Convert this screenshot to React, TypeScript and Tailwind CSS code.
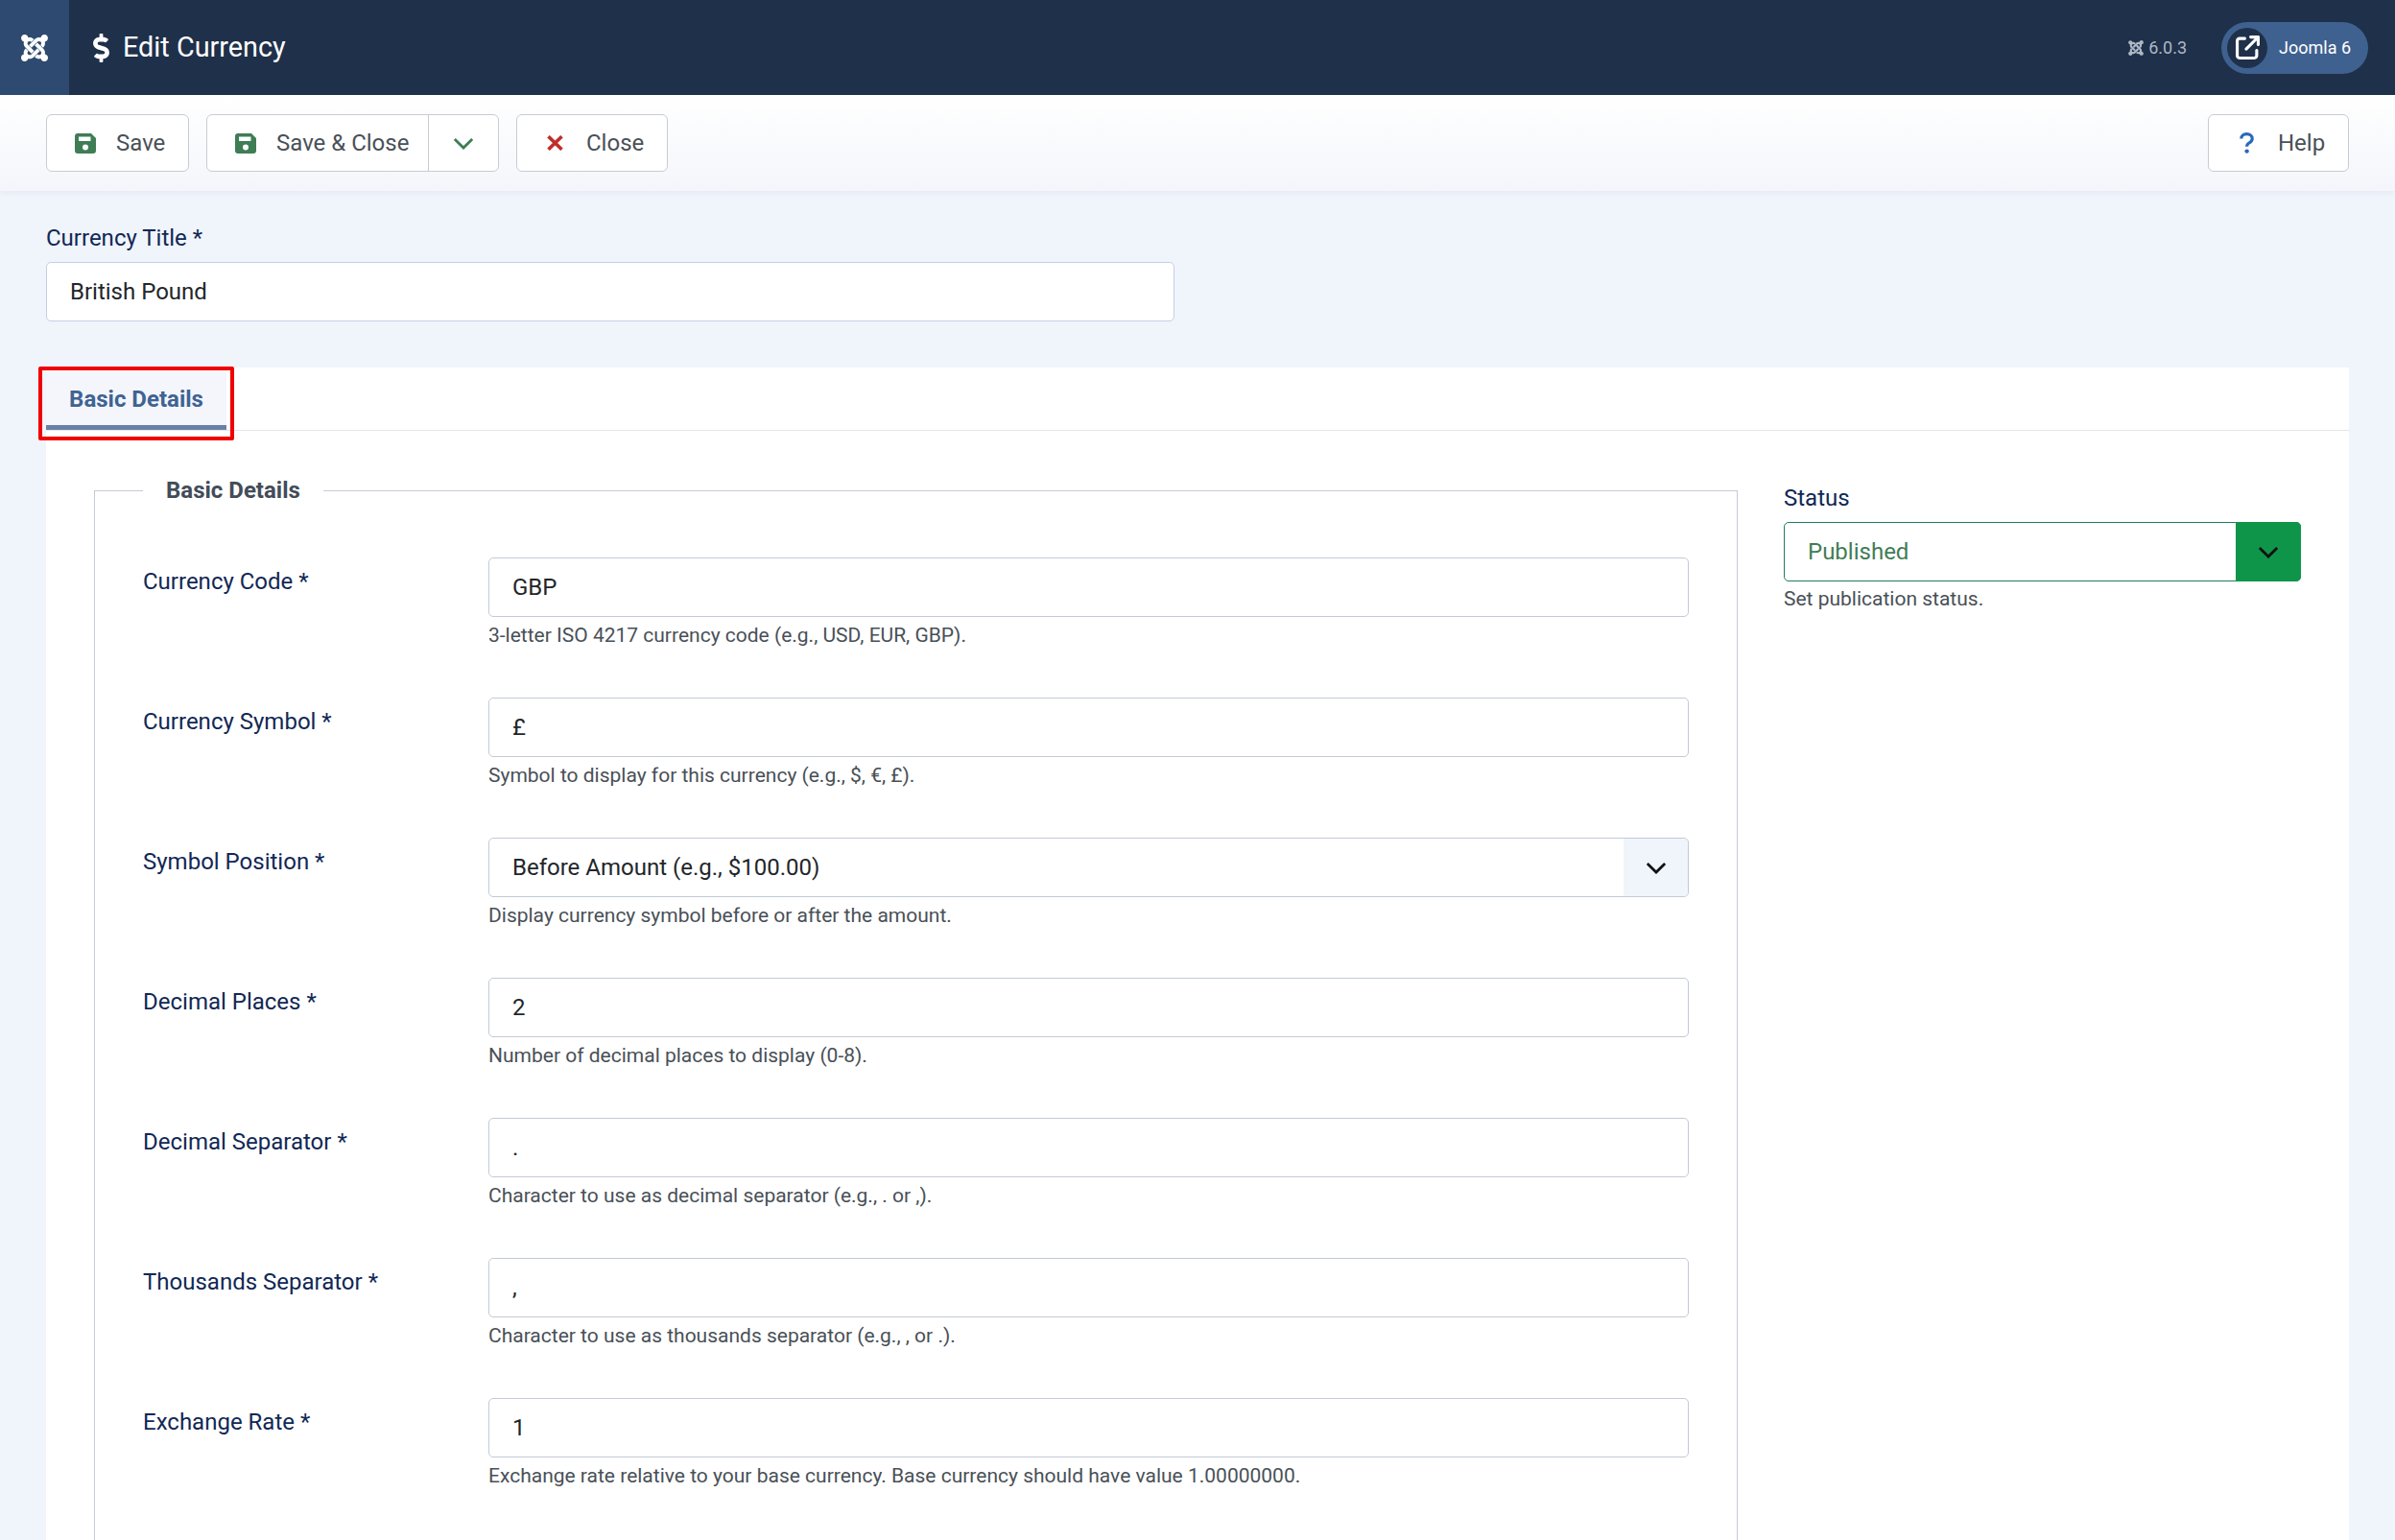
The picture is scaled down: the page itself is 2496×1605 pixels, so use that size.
import React from 'react';
import { FaJoomla, FaDollarSign } from 'react-icons/fa';
import { FaArrowUpRightFromSquare } from 'react-icons/fa6';

const Chevron: React.FC<{ className?: string }> = ({ className }) => (
  <svg viewBox="0 0 24 14" className={className} fill="none" stroke="currentColor" strokeWidth="3">
    <path d="M2 2l10 10L22 2" />
  </svg>
);

const SaveIcon: React.FC = () => (
  <svg viewBox="0 0 22 21" className="w-[22px] h-[21px] mr-[21px] text-[#3f7d55]">
    <path
      fill="currentColor"
      fillRule="evenodd"
      d="M3 0h14l5 5v13a3 3 0 0 1-3 3H3a3 3 0 0 1-3-3V3a3 3 0 0 1 3-3zM4 3.5v4.5h12.5V3.5zM11 11.5a3 3 0 1 0 0 6 3 3 0 0 0 0-6z"
    />
  </svg>
);

const CloseIcon: React.FC = () => (
  <svg viewBox="0 0 17 16" className="w-[17px] h-[16px] mr-[24px] text-[#bf2f2b]" fill="none" stroke="currentColor" strokeWidth="3.6">
    <path d="M1.5 1.2l14 13.6M15.5 1.2l-14 13.6" />
  </svg>
);

const HelpIcon: React.FC = () => (
  <svg viewBox="0 0 15 22" className="w-[15px] h-[22px] mr-[25px] text-[#2a69b8]">
    <path
      fill="none"
      stroke="currentColor"
      strokeWidth="3.2"
      d="M1.8 6.5C1.8 3.4 4.2 1.7 7.4 1.7c3.3 0 5.8 1.8 5.8 4.7 0 2.5-1.7 3.6-3.3 4.6-1.5.9-2.3 1.7-2.3 3.7"
    />
    <circle cx="7.6" cy="19.6" r="2.2" fill="currentColor" />
  </svg>
);

const fields = [
  { label: 'Currency Code *', value: 'GBP', help: '3-letter ISO 4217 currency code (e.g., USD, EUR, GBP).' },
  { label: 'Currency Symbol *', value: '£', help: 'Symbol to display for this currency (e.g., $, €, £).' },
  { label: 'Symbol Position *', value: 'Before Amount (e.g., $100.00)', help: 'Display currency symbol before or after the amount.', select: true },
  { label: 'Decimal Places *', value: '2', help: 'Number of decimal places to display (0-8).' },
  { label: 'Decimal Separator *', value: '.', help: 'Character to use as decimal separator (e.g., . or ,).' },
  { label: 'Thousands Separator *', value: ',', help: 'Character to use as thousands separator (e.g., , or .).' },
  { label: 'Exchange Rate *', value: '1', help: 'Exchange rate relative to your base currency. Base currency should have value 1.00000000.' },
];

const inputBase = 'w-full h-[62px] rounded-[5px] border bg-white px-6 text-[24px] outline-none';

const ToolbarButton: React.FC<{ icon: React.ReactNode; label: string; className: string }> = ({ icon, label, className }) => (
  <button className={`h-[60px] flex items-center bg-white border border-[#c8ccd3] rounded-[6px] text-[24px] text-[#495057] ${className}`}>
    {icon}
    <span>{label}</span>
  </button>
);

const App: React.FC = () => {
  return (
    <div className="h-[1605px] overflow-hidden bg-[#f0f4fb] font-['Roboto',sans-serif]">
      <header className="h-[99px] flex items-center bg-[#1f304a] text-white">
        <div className="w-[72px] h-full flex items-center justify-center bg-[#2e4a71]">
          <FaJoomla className="w-[32px] h-[32px]" />
        </div>
        <FaDollarSign className="ml-[25px] w-[17px] h-[30px]" />
        <h1 className="ml-[14px] text-[28.8px] leading-none">Edit Currency</h1>
        <div className="ml-auto flex items-center text-[#aeb7c4] text-[18px]">
          <FaJoomla className="w-[18px] h-[18px]" />
          <span className="ml-[4px]">6.0.3</span>
        </div>
        <div className="ml-[36px] mr-[28px] w-[153px] h-[54px] flex items-center rounded-full bg-[#3f618f] pl-[6px]">
          <div className="w-[42px] h-[42px] rounded-full bg-[#1f304a] flex items-center justify-center">
            <FaArrowUpRightFromSquare className="w-[25px] h-[25px]" />
          </div>
          <span className="ml-[12px] text-[18px]">Joomla 6</span>
        </div>
      </header>

      <div className="h-[100px] flex items-start pt-[20px] px-[48px] bg-gradient-to-b from-white to-[#f4f6fb] shadow-[0_2px_6px_rgba(30,50,90,0.05)]">
        <ToolbarButton className="w-[149px] pl-[29px]" icon={<SaveIcon />} label="Save" />
        <div className="ml-[18px] w-[305px] h-[60px] flex bg-white border border-[#c8ccd3] rounded-[6px] text-[24px] text-[#495057]">
          <button className="w-[231px] flex items-center pl-[29px] border-r border-[#c8ccd3]">
            <SaveIcon />
            <span>Save &amp; Close</span>
          </button>
          <button className="flex-1 flex items-center justify-center text-[#3f7d55]">
            <Chevron className="w-[22px] h-[13px]" />
          </button>
        </div>
        <ToolbarButton className="ml-[18px] w-[158px] pl-[31px]" icon={<CloseIcon />} label="Close" />
        <ToolbarButton className="ml-auto w-[147px] pl-[32px]" icon={<HelpIcon />} label="Help" />
      </div>

      <main className="px-[48px]">
        <label className="block mt-[31px] text-[24px] leading-[36px] text-[#112855]">Currency Title *</label>
        <div className="mt-[7px] w-[1176px]">
          <input readOnly defaultValue="British Pound" className={`${inputBase} block border-[#c3d0e4] text-[#22262a]`} />
        </div>

        <section className="relative mt-[48px] bg-white min-h-[1300px]">
          <div className="h-[66px] border-b border-[#e3e6eb]">
            <div className="w-[188px] h-[65px] flex items-center justify-center pt-[5px] bg-[#f4f6fb] border-b-[5px] border-[#6a80a8] text-[24px] font-bold text-[#3f6394]">
              Basic Details
            </div>
          </div>
          <div className="absolute left-[-8px] top-[-1px] w-[204px] h-[77px] rounded-[2px] border-[4px] border-[#f00000]" />

          <div className="grid grid-cols-[1713px_539px] gap-x-[48px] pl-[50px] pt-[44px]">
            <fieldset className="border border-[#c4cad6] px-[50px] h-[1200px]">
              <legend className="px-[24px] text-[24px] leading-[36px] font-bold text-[#434c58]">Basic Details</legend>
              <div className="mt-[52px]">
                {fields.map((f) => (
                  <div key={f.label} className="h-[146px] grid grid-cols-[360px_1251px]">
                    <label className="pt-[7px] text-[24px] leading-[36px] text-[#112855]">{f.label}</label>
                    <div>
                      {f.select ? (
                        <div className="relative">
                          <select className={`${inputBase} appearance-none border-[#c4cad6] text-[#22262a]`}>
                            <option>{f.value}</option>
                          </select>
                          <div className="absolute right-px top-px bottom-px w-[67px] flex items-center justify-center rounded-r-[5px] bg-[#f0f4fb] text-[#111]">
                            <Chevron className="w-[22px] h-[13px]" />
                          </div>
                        </div>
                      ) : (
                        <input readOnly defaultValue={f.value} className={`${inputBase} border-[#c4cad6] text-[#22262a]`} />
                      )}
                      <p className="mt-[4px] text-[21px] leading-[31px] text-[#495057]">{f.help}</p>
                    </div>
                  </div>
                ))}
              </div>
            </fieldset>

            <div className="pt-[8px]">
              <label className="block text-[24px] leading-[36px] text-[#112855]">Status</label>
              <div className="relative mt-[7px]">
                <select className={`${inputBase} appearance-none border-[#1d7f59] text-[#3f7d55]`}>
                  <option>Published</option>
                </select>
                <div className="absolute right-0 top-0 bottom-0 w-[68px] flex items-center justify-center rounded-r-[5px] bg-[#0f9549] text-[#111]">
                  <Chevron className="w-[22px] h-[13px]" />
                </div>
              </div>
              <p className="mt-[3px] text-[21px] leading-[31px] text-[#495057]">Set publication status.</p>
            </div>
          </div>
        </section>
      </main>
    </div>
  );
};

export default App;
